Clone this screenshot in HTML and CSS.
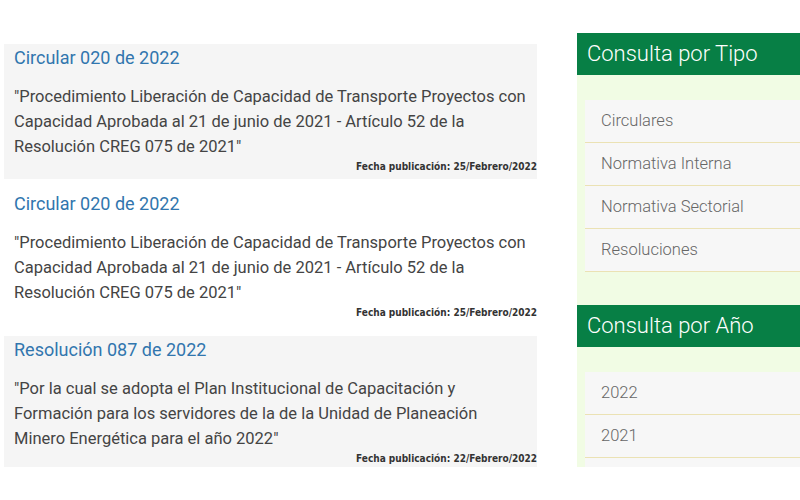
FILE: index.html
```html
<!DOCTYPE html>
<html lang="es">
<head>
    <meta charset="UTF-8">
    <meta name="viewport" content="width=device-width, initial-scale=1.0">
    <title>Normatividad</title>
    <link rel="stylesheet" href="styles.css">
</head>
<body>
    <div class="page">
        <main class="listado">
            <article class="documento">
                <h3 class="doc-titulo">Circular 020 de 2022</h3>
                <p class="doc-texto">"Procedimiento Liberación de Capacidad de Transporte Proyectos con Capacidad Aprobada al 21 de junio de 2021 - Artículo 52 de la Resolución CREG 075 de 2021"</p>
                <div class="doc-fecha">Fecha publicación: 25/Febrero/2022</div>
            </article>
            <article class="documento">
                <h3 class="doc-titulo">Circular 020 de 2022</h3>
                <p class="doc-texto">"Procedimiento Liberación de Capacidad de Transporte Proyectos con Capacidad Aprobada al 21 de junio de 2021 - Artículo 52 de la Resolución CREG 075 de 2021"</p>
                <div class="doc-fecha">Fecha publicación: 25/Febrero/2022</div>
            </article>
            <article class="documento">
                <h3 class="doc-titulo">Resolución 087 de 2022</h3>
                <p class="doc-texto">"Por la cual se adopta el Plan Institucional de Capacitación y Formación para los servidores de la de la Unidad de Planeación Minero Energética para el año 2022"</p>
                <div class="doc-fecha">Fecha publicación: 22/Febrero/2022</div>
            </article>
        </main>

        <aside class="sidebar">
            <h2 class="side-titulo">Consulta por Tipo</h2>
            <ul class="side-lista">
                <li>Circulares</li>
                <li>Normativa Interna</li>
                <li>Normativa Sectorial</li>
                <li>Resoluciones</li>
            </ul>

            <h2 class="side-titulo">Consulta por Año</h2>
            <ul class="side-lista">
                <li>2022</li>
                <li>2021</li>
                <li></li>
            </ul>
        </aside>
    </div>
</body>
</html>
```

FILE: styles.css
```css
body {
    margin: 0;
    font-family: Roboto, "Liberation Sans", sans-serif;
    background: #ffffff;
    color: #444;
}

.page {
    display: flex;
    height: 467px;
    overflow: hidden;
}

.listado {
    width: 533px;
    margin-left: 4px;
    padding-top: 44px;
    display: flex;
    flex-direction: column;
    gap: 11px;
}

.documento {
    padding: 2px 0 6px 10px;
    height: 128px;
}

.documento:nth-child(odd) {
    background: #f5f5f5;
}

.doc-titulo {
    margin: 0;
    font-size: 18px;
    font-weight: 400;
    line-height: 24px;
    color: #3176ae;
}

.doc-texto {
    margin: 14px 0 0 0;
    padding-right: 10px;
    font-size: 16.5px;
    line-height: 25px;
    color: #444;
}

.doc-fecha {
    margin-top: 2px;
    text-align: right;
    font-family: "DejaVu Sans Condensed", "Liberation Sans", sans-serif;
    font-stretch: condensed;
    font-size: 10px;
    font-weight: bold;
    color: #333;
    line-height: 12px;
}

.sidebar {
    margin-left: 40px;
    margin-top: 33px;
    width: 223px;
    background: #f1fce4;
}

.side-titulo {
    margin: 0;
    height: 42px;
    padding-left: 10px;
    background: #077f45;
    color: #ffffff;
    font-size: 22px;
    font-weight: 300;
    line-height: 42px;
}

.side-lista {
    list-style: none;
    margin: 0;
    padding: 25px 0 33px 8px;
}

.side-lista li {
    height: 42px;
    line-height: 42px;
    padding-left: 16px;
    background: #f7f7f7;
    border-bottom: 1px solid #ebe2b4;
    font-size: 16.5px;
    font-weight: 300;
    color: #666;
}
```
